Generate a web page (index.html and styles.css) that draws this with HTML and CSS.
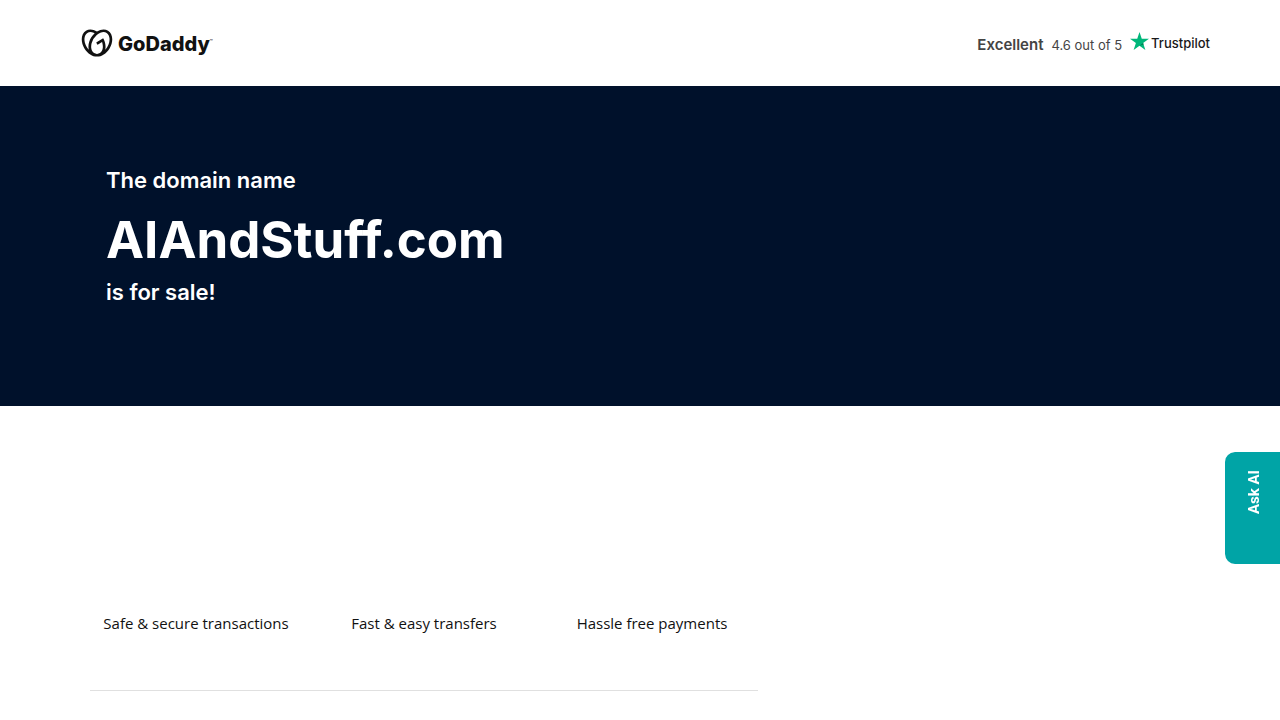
FILE: index.html
```html
<!DOCTYPE html>
<html lang="en">
<head>
    <meta charset="UTF-8">
    <meta name="viewport" content="width=device-width, initial-scale=1.0">
    <title>AIAndStuff.com is for sale</title>
    <link rel="stylesheet" href="styles.css">
</head>
<body>
    <header class="site-header">
        <a href="#" class="logo">
            <svg class="logo-icon" viewBox="0 1 24 22" aria-hidden="true">
                <path d="M20.702 2.29c-2.494-1.554-5.778-1.187-8.706.654C9.076 1.104 5.79.736 3.3 2.29c-3.941 2.463-4.42 8.806-1.07 14.167 2.47 3.954 6.333 6.269 9.77 6.226 3.439.043 7.301-2.273 9.771-6.226 3.347-5.361 2.872-11.704-1.069-14.167zM4.042 15.328a12.838 12.838 0 01-1.546-3.541 10.12 10.12 0 01-.336-3.338c.15-1.98.956-3.524 2.27-4.345 1.315-.822 3.052-.87 4.903-.137.281.113.556.24.825.382A15.11 15.11 0 007.5 7.54c-2.035 3.255-2.655 6.878-1.945 9.765a13.247 13.247 0 01-1.514-1.98v.003zm17.465-3.541a12.866 12.866 0 01-1.547 3.54 13.25 13.25 0 01-1.513 1.984c.635-2.589.203-5.76-1.353-8.734a.39.39 0 00-.563-.153l-4.852 3.032a.397.397 0 00-.126.546l.712 1.139a.395.395 0 00.547.126l3.145-1.965c.101.306.203.606.28.916.296 1.086.41 2.214.335 3.337-.15 1.982-.956 3.525-2.27 4.347a4.437 4.437 0 01-2.25.65h-.101a4.432 4.432 0 01-2.25-.65c-1.314-.822-2.121-2.365-2.27-4.347-.074-1.123.039-2.251.335-3.337a13.212 13.212 0 014.05-6.482 10.148 10.148 0 012.849-1.765c1.845-.733 3.586-.685 4.9.137 1.316.822 2.122 2.365 2.271 4.345a10.146 10.146 0 01-.33 3.334z"/>
            </svg>
            <span class="logo-text">GoDaddy</span>
            <span class="logo-mark">™</span>
        </a>
        <a href="#" class="rating">
            <strong class="rating-label">Excellent</strong>
            <span class="rating-score">4.6 out of 5</span>
            <span class="trustpilot">
                <svg class="trustpilot-star" viewBox="0 0 20 19" aria-hidden="true">
                    <path fill="#00b67a" d="M20 7.2h-7.6L10 0 7.600 7.200H0l6.200 4.500L3.800 19l6.200-4.500 6.200 4.500-2.400-7.300z"/>
                    <path fill="#007a4d" d="M14.300 13.300l-.5-1.600L10 14.500z"/>
                </svg>
                <span class="trustpilot-text">Trustpilot</span>
            </span>
        </a>
    </header>

    <section class="hero">
        <p class="hero-text">The domain name</p>
        <h1 class="domain">AIAndStuff.com</h1>
        <p class="hero-text">is for sale!</p>
    </section>

    <main class="content">
        <ul class="features">
            <li>Safe &amp; secure transactions</li>
            <li>Fast &amp; easy transfers</li>
            <li>Hassle free payments</li>
        </ul>
    </main>

    <button type="button" class="ask-btn">Ask AI</button>
</body>
</html>
```
FILE: styles.css
```css
:root {
    --navy: #00112b;
    --teal: #00a4a6;
    --text-color: #111;
    --border-color: #e0e0e0;
}

* {
    margin: 0;
    padding: 0;
    box-sizing: border-box;
}

body {
    font-family: "Open Sans", sans-serif;
    font-size: 15px;
    line-height: 24px;
    color: var(--text-color);
    background-color: #fff;
}

a {
    color: inherit;
    text-decoration: none;
}

.site-header {
    display: flex;
    justify-content: space-between;
    align-items: center;
    height: 86px;
    padding: 0 70px 0 81px;
}

.logo {
    display: flex;
    align-items: center;
    gap: 5px;
}

.logo-icon {
    width: 32px;
    height: 28px;
    fill: #111;
}

.logo-text {
    padding-top: 2px;
    font-family: Inter, sans-serif;
    font-size: 20px;
    font-weight: 800;
}

.logo-mark {
    align-self: flex-start;
    margin-left: -5px;
    font-size: 4px;
}

.rating {
    display: flex;
    align-items: center;
    gap: 8px;
    padding-top: 3px;
    font-family: Inter, sans-serif;
    font-size: 13px;
    color: #444;
}

.rating-label {
    font-size: 15px;
    font-weight: 600;
}

.trustpilot {
    display: flex;
    align-items: center;
    gap: 2px;
    padding-bottom: 8px;
    color: #191919;
}

.trustpilot-star {
    width: 19px;
    height: 18px;
}

.trustpilot-text {
    padding-top: 4px;
    font-weight: 500;
}

.hero {
    min-height: 320px;
    padding: 78px 106px;
    color: #fff;
    background-color: var(--navy);
}

.hero-text {
    font-family: Inter, sans-serif;
    font-size: 22px;
    font-weight: 600;
    line-height: 32px;
}

.domain {
    padding-top: 8px;
    font-family: Inter, sans-serif;
    font-size: 51px;
    font-weight: 700;
    line-height: 72px;
}

.content {
    width: 668px;
    max-width: calc(100% - 180px);
    margin-left: 90px;
    padding-top: 205px;
}

.features {
    display: grid;
    grid-template-columns: repeat(3, 1fr);
    gap: 16px;
    padding-bottom: 55px;
    border-bottom: 1px solid var(--border-color);
    list-style: none;
    text-align: center;
}

.ask-btn {
    position: fixed;
    top: 452px;
    right: 0;
    width: 55px;
    height: 112px;
    padding: 32px 4px 0 0;
    border: none;
    border-radius: 0 10px 10px 0;
    font-family: Roboto, sans-serif;
    font-size: 15px;
    font-weight: 700;
    color: #fff;
    background-color: var(--teal);
    writing-mode: vertical-rl;
    transform: rotate(180deg);
    cursor: pointer;
}
```
